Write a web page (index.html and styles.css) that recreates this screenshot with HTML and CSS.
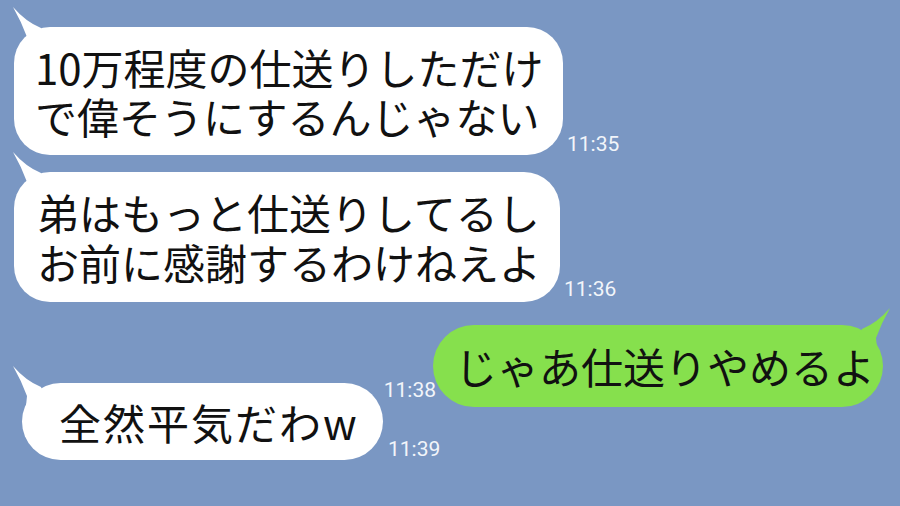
FILE: index.html
```html
<!DOCTYPE html>
<html lang="ja">
<head>
<meta charset="utf-8">
<link rel="stylesheet" href="styles.css">
</head>
<body>
<div class="chat">
  <div class="row in r1">
    <div class="bubble two b1">
      <svg class="tail tail-l" viewBox="0 0 40 44" width="40" height="44"><path d="M3 4 Q16 19 31 25 L38 44 L16 44 L17 34 Q11 18 3 4 Z"/></svg>
      <p>10万程度の仕送りしただけ<br>で偉そうにするんじゃない</p>
    </div>
    <span class="time">11:35</span>
  </div>
  <div class="row in r2">
    <div class="bubble two b2">
      <svg class="tail tail-l" viewBox="0 0 40 44" width="40" height="44"><path d="M3 4 Q16 19 31 25 L38 44 L16 44 L17 34 Q11 18 3 4 Z"/></svg>
      <p>弟はもっと仕送りしてるし<br>お前に感謝するわけねえよ</p>
    </div>
    <span class="time t2">11:36</span>
  </div>
  <div class="row out r3">
    <span class="time t3">11:38</span>
    <div class="bubble green b3">
      <svg class="tail tail-r" viewBox="0 0 40 44" width="40" height="44"><path d="M37 4 Q24 19 9 25 L2 44 L24 44 L23 34 Q29 18 37 4 Z"/></svg>
      <p>じゃあ仕送りやめるよ</p>
    </div>
  </div>
  <div class="row in r4">
    <div class="bubble b4">
      <svg class="tail tail-l4" viewBox="0 0 40 44" width="40" height="44"><path d="M3 4 Q16 19 31 25 L38 44 L16 44 L17 34 Q11 18 3 4 Z"/></svg>
      <p>全然平気だわw</p>
    </div>
    <span class="time">11:39</span>
  </div>
</div>
</body>
</html>
```
FILE: styles.css
```css
html, body {
  margin: 0;
  padding: 0;
}
body {
  width: 900px;
  height: 506px;
  overflow: hidden;
  background: #7a97c3;
  font-family: "Noto Sans CJK JP", "Noto Sans", sans-serif;
  color: #111;
}
.chat {
  display: flex;
  flex-direction: column;
  padding-top: 27px;
}
.row {
  display: flex;
  align-items: flex-end;
  gap: 4px;
}
.row.in {
  padding-left: 14px;
}
.row.out {
  justify-content: flex-end;
  padding-right: 17px;
  gap: 0;
}
.row.r2 { margin-top: 17px; }
.row.r3 { margin-top: 23px; }
.row.r4 { margin-top: -24px; padding-left: 22px; gap: 5px; }

.bubble {
  position: relative;
  box-sizing: border-box;
  background: #fff;
  font-size: 42px;
  white-space: nowrap;
}
.bubble p {
  position: relative;
  margin: 0;
}
.bubble.two {
  border-radius: 36px;
}
.b1 {
  width: 549px;
  padding: 15px 0 15px 21px;
  line-height: 49px;
}
.b2 {
  width: 546px;
  padding: 15px 0 15px 23px;
  line-height: 50px;
}
.b3 {
  width: 450px;
  height: 82px;
  line-height: 82px;
  padding-left: 22px;
  border-radius: 41px;
  background: #86e04d;
}
.b4 {
  width: 361px;
  height: 77px;
  line-height: 77px;
  padding-left: 37px;
  letter-spacing: 2px;
  border-radius: 39px;
}
.tail {
  position: absolute;
  fill: #fff;
}
.tail-l {
  left: -4px;
  top: -24px;
}
.tail-l4 {
  left: -12px;
  top: -21px;
}
.tail-r {
  right: -10px;
  top: -21px;
  fill: #86e04d;
}
.time {
  font-family: Roboto, "Noto Sans", sans-serif;
  font-size: 21px;
  line-height: 21px;
  color: #f2f5fa;
}
.t2 { margin-bottom: 2px; }
.t3 { margin-bottom: 6px; margin-right: -3px; position: relative; z-index: 1; }
```
